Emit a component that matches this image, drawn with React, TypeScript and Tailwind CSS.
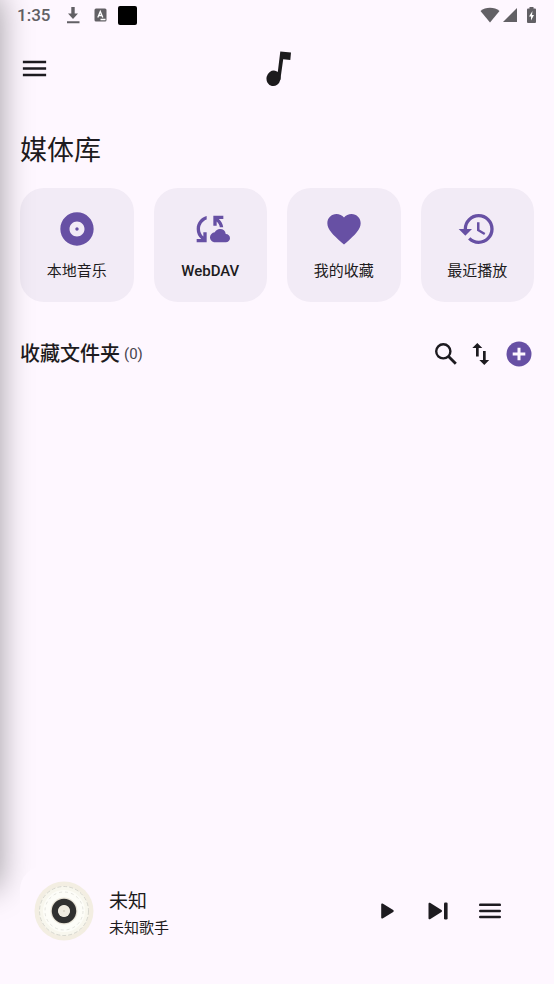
import React from 'react';
import { MdAlbum, MdCloudSync, MdFavorite, MdHistory, MdMenu } from 'react-icons/md';

const StatusBar: React.FC = () => (
  <div className="flex h-[30px] items-center justify-between pl-[17px] pr-[18px] text-[#626065]">
    <div className="flex items-center">
      <span className="w-[49px] pt-0.5 text-[17px] font-medium">1:35</span>
      <svg width="14" height="18" viewBox="0 0 14 18" fill="currentColor">
        <path d="M5.300 1h3.400v6.500h3.300L7 13 2 7.500h3.300zM1 15.300h12.500v1.900H1z" />
      </svg>
      <svg className="ml-[14px]" width="13" height="14" viewBox="0 0 13 14">
        <rect x="0.500" y="0.500" width="12" height="13" rx="1.500" fill="currentColor" />
        <path d="M3.800 9.500 6.300 3.500l2.500 6M4.600 7.500H8M6.500 11.500h5" fill="none" stroke="#fff" strokeWidth="1.300" />
      </svg>
      <span className="ml-[11px] size-[19px] rounded-xs bg-black" />
    </div>
    <div className="flex items-center">
      <svg width="20" height="16" viewBox="0 0 20 16" fill="currentColor">
        <path d="M10 15.500.500 4C5.500-.3 14.500-.3 19.500 4z" />
      </svg>
      <svg className="ml-[3px]" width="14" height="14" viewBox="0 0 14 14" fill="currentColor">
        <path d="M14 0v14H0z" />
      </svg>
      <svg className="ml-[10px]" width="9" height="16" viewBox="0 0 9 16">
        <path d="M2.500 0h4v1.500H8q1 0 1 1V15q0 1-1 1H1q-1 0-1-1V2.500q0-1 1-1h1.500z" fill="currentColor" />
        <path d="M5.500 4 2 9.500h2V13.500L7 8H5z" fill="#fff" />
      </svg>
    </div>
  </div>
);

const NoteLogo: React.FC = () => (
  <svg width="26" height="36" viewBox="0 0 26 36" fill="#1c1b1d">
    <ellipse cx="7.500" cy="27.300" rx="7" ry="7.800" transform="rotate(12 7.500 27.300)" />
    <path d="M14.300.500 25 1.400 24.300 9 17.200 8.200 14.300 29 11.300 25z" />
  </svg>
);

const Vinyl: React.FC = () => (
  <svg width="60" height="60" viewBox="0 0 60 60" fill="none">
    <circle cx="30" cy="30" r="29.500" fill="#f3eee2" />
    <circle cx="30" cy="30" r="25" fill="#f8f7ee" />
    <circle cx="30" cy="30" r="21" fill="#fdfdf8" />
    <circle cx="30" cy="30" r="24.500" stroke="#c9c8c1" strokeWidth="0.700" strokeDasharray="4 2" />
    <circle cx="30" cy="30" r="19" stroke="#d3d4cd" strokeWidth="0.600" strokeDasharray="3 3" />
    <circle cx="30" cy="30" r="13.500" fill="#e9e4d8" />
    <circle cx="30" cy="30" r="9" stroke="#303030" strokeWidth="6.500" />
    <circle cx="30" cy="30" r="6" fill="#efebe0" />
    <circle cx="30" cy="30" r="1" fill="#d9d3c4" />
  </svg>
);

const libraryItems = [
  { label: '本地音乐', Icon: MdAlbum, weight: 'font-normal' },
  { label: 'WebDAV', Icon: MdCloudSync, weight: 'font-medium' },
  { label: '我的收藏', Icon: MdFavorite, weight: 'font-normal' },
  { label: '最近播放', Icon: MdHistory, weight: 'font-normal' },
];

const MiniPlayer: React.FC = () => (
  <footer className="relative mx-5 mb-7 flex h-[90px] items-center rounded-3xl bg-[#fef7ff] pl-[14px] pr-7">
    <Vinyl />
    <div className="ml-[15px] flex-1 pt-1.5">
      <p className="text-[19px] leading-7">未知</p>
      <p className="text-[15px] leading-6">未知歌手</p>
    </div>
    <div className="flex items-center">
      <button type="button" aria-label="播放" className="flex size-[30px] items-center justify-center">
        <svg width="14" height="16" viewBox="0 0 14 16" fill="currentColor">
          <path d="M1.200 1.500v13c0 1 1 1.300 1.800.8L13.200 9c.7-.5.7-1.500 0-2L3 .7C2.200.2 1.200.5 1.200 1.500z" />
        </svg>
      </button>
      <button type="button" aria-label="下一首" className="ml-[21px] flex size-[30px] items-center justify-center">
        <svg width="20" height="18" viewBox="0 0 20 18" fill="currentColor">
          <path d="M.500 1.800v14.400c0 1 1 1.500 1.900.9L13.500 10c.7-.5.700-1.500 0-2L2.400.900C1.500.300.500.800.500 1.800z" />
          <rect x="16" y="0.500" width="3.600" height="17" rx="1.300" />
        </svg>
      </button>
      <button type="button" aria-label="播放列表" className="ml-[21px] flex size-[32px] items-center justify-center">
        <svg width="22" height="16" viewBox="0 0 22 16" fill="currentColor">
          <rect y="0.600" width="22" height="2.500" rx="1.200" />
          <rect y="6.700" width="22" height="2.500" rx="1.200" />
          <rect y="12.800" width="22" height="2.500" rx="1.200" />
        </svg>
      </button>
    </div>
  </footer>
);

const App: React.FC = () => {
  return (
    <div className="relative flex min-h-screen flex-col overflow-hidden bg-[#fef7ff] font-[Roboto,'Noto_Sans_CJK_SC',sans-serif] text-[#1d1b20]">
      <StatusBar />

      <header className="grid h-[77px] grid-cols-3 items-center px-[19px]">
        <button type="button" aria-label="菜单" className="justify-self-start">
          <MdMenu size={31} />
        </button>
        <div className="justify-self-center pl-1">
          <NoteLogo />
        </div>
      </header>

      <main className="flex-1 px-5">
        <h1 className="mt-6 text-[27px] leading-[40px]">媒体库</h1>

        <div className="mt-[17px] grid grid-cols-4 gap-5">
          {libraryItems.map(({ label, Icon, weight }) => (
            <button
              key={label}
              type="button"
              className="flex h-[114px] flex-col items-center rounded-3xl bg-[#f2ebf6] pt-[21px]"
            >
              <Icon size={40} color="#6750a4" />
              <span className={`mt-[10px] text-[15px] leading-6 ${weight}`}>{label}</span>
            </button>
          ))}
        </div>

        <div className="mt-[36px] flex h-8 items-center">
          <h2 className="text-[20px] font-medium">收藏文件夹</h2>
          <span className="ml-1 flex-1 text-[15px] text-[#49454f]">(0)</span>
          <button type="button" aria-label="搜索">
            <svg width="24" height="24" viewBox="0 0 24 24" fill="none" stroke="currentColor">
              <circle cx="9.300" cy="9.300" r="7.100" strokeWidth="2.400" />
              <path d="m14.300 14.300 7.500 7.500" strokeWidth="2.800" />
            </svg>
          </button>
          <button type="button" aria-label="排序" className="ml-[14px]">
            <svg width="18" height="24" viewBox="0 0 18 24" fill="currentColor">
              <path d="m5.300 1 5 5H6.700v8.500H4V6H.3zM11 9h2.700v9h3.500l-4.900 5-5-5H11z" />
            </svg>
          </button>
          <button type="button" aria-label="添加" className="ml-4 mr-0.5">
            <svg width="26" height="26" viewBox="0 0 26 26">
              <circle cx="13" cy="13" r="12.500" fill="#6750a4" />
              <path d="M13 6.700v12.600M6.700 13h12.600" stroke="#fef7ff" strokeWidth="3" />
            </svg>
          </button>
        </div>
      </main>

      <div className="pointer-events-none absolute -left-10 -top-1 bottom-24 w-10 shadow-[0_0_32px_0_rgba(0,0,0,0.38)]" />

      <MiniPlayer />
    </div>
  );
};

export default App;
